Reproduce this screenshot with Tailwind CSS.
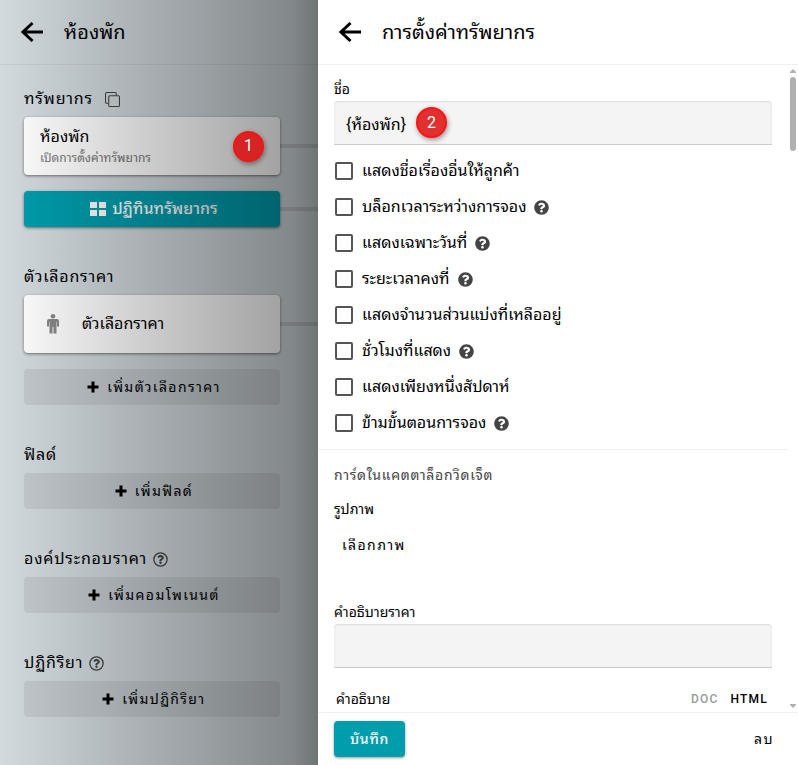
<!DOCTYPE html>
<html lang="th">
<head>
    <meta charset="UTF-8">
    <meta name="viewport" content="width=device-width, initial-scale=1.0">
    <title>การตั้งค่าทรัพยากร</title>
    <script src="https://cdn.jsdelivr.net/npm/@tailwindcss/browser@4"></script>
</head>
<body class="flex h-screen overflow-hidden bg-white font-['Roboto','Tahoma','Noto_Sans_Thai_Looped','Loma','Noto_Sans',sans-serif] text-base text-black">

    <!-- Shared icons -->
    <svg class="hidden">
        <symbol id="arrow" viewBox="0 0 22 22">
            <path d="M11.5 2 2 11l9.500 9M2.500 11H22" fill="none" stroke="currentColor" stroke-width="3"/>
        </symbol>
        <symbol id="plus" viewBox="0 0 12 12">
            <path d="M4.500 0.500h3v4h4v3h-4v4h-3v-4h-4v-3h4z" fill="currentColor"/>
        </symbol>
        <symbol id="help" viewBox="0 0 512 512">
            <path d="M504 256c0 137-111 248-248 248S8 393 8 256 119 8 256 8s248 111 248 248zM262.700 90c-54.500 0-89.300 23-116.500 63.800-3.500 5.300-2.400 12.400 2.700 16.300l34.700 26.300c5.200 3.900 12.600 3 16.700-2.100 17.900-22.700 30.100-35.800 57.300-35.800 20.400 0 45.700 13.100 45.700 33 0 15-12.400 22.700-32.500 34C247.100 238.500 216 254.900 216 296v4c0 6.600 5.400 12 12 12h56c6.600 0 12-5.400 12-12v-1.300c0-28.500 83.200-29.600 83.200-106.700 0-58-60.200-102-116.500-102zM256 338c-25.400 0-46 20.600-46 46s20.600 46 46 46 46-20.600 46-46-20.600-46-46-46z" fill="currentColor" fill-rule="evenodd"/>
        </symbol>
        <symbol id="help-outline" viewBox="0 0 512 512">
            <circle cx="256" cy="256" r="226" fill="none" stroke="currentColor" stroke-width="44"/>
            <path d="M262.700 104c-50 0-83 22-108 60-3.500 5.300-2.400 10.400 2.700 14.300l32 24c5.200 3.900 11 3 15-2.100 16-20 28-32 52-32 18 0 40 12 40 30 0 13-11 20-29 30-22 12-50 27-50 62v6c0 6.600 5.400 12 12 12h50c6.600 0 12-5.400 12-12v-2c0-24 78-26 78-94 0-52-54-96.200-106.700-96.200zM256 322c-23 0-42 19-42 42s19 42 42 42 42-19 42-42-19-42-42-42z" fill="currentColor"/>
        </symbol>
    </svg>

    <!-- Service page, dimmed behind the drawer -->
    <main class="relative min-w-0 flex-1 bg-[#d2dade]">
        <header class="flex h-[65px] items-center gap-[21px] border-b border-black/5 pl-[21px]">
            <button aria-label="กลับ"><svg class="size-[22px]"><use href="#arrow"/></svg></button>
            <h1 class="text-xl">ห้องพัก</h1>
        </header>

        <div class="flex flex-col gap-8 py-4 pl-6">
            <section>
                <div class="flex h-9 items-center gap-3">
                    <h2 class="tracking-wider">ทรัพยากร</h2>
                    <button aria-label="คัดลอก" class="text-[#444]">
                        <svg class="size-[15px]" viewBox="0 0 14 14" fill="none" stroke="currentColor">
                            <rect x="3.500" y="3.500" width="10" height="10" rx="1"/>
                            <path d="M3 10.500H1.500a1 1 0 0 1-1-1v-8a1 1 0 0 1 1-1h8a1 1 0 0 1 1 1V3"/>
                        </svg>
                    </button>
                </div>
                <div class="flex items-center">
                    <a href="#" class="flex h-[58px] flex-1 items-center justify-between rounded bg-white px-4 shadow-[0_1px_3px_rgba(0,0,0,0.5)]">
                        <span class="flex flex-col">
                            <span class="leading-6">ห้องพัก</span>
                            <span class="text-xs leading-[18px] text-[#777]">เปิดการตั้งค่าทรัพยากร</span>
                        </span>
                        <span class="relative z-10 flex size-[31px] items-center justify-center rounded-full border-2 border-[#f51414] bg-[#d62424] text-base text-white shadow-[1px_2px_5px_rgba(0,0,0,0.4)]">1</span>
                    </a>
                    <div class="h-1 w-[38px] bg-black/10"></div>
                </div>
                <div class="mt-4 flex items-center">
                    <button class="flex h-9 flex-1 items-center justify-center gap-[6px] rounded bg-[#009dac] pl-1 font-medium text-white shadow-[0_1px_3px_rgba(0,0,0,0.5)]">
                        <svg class="size-4" viewBox="0 0 16 16" fill="currentColor">
                            <path d="M0 1h7v6H0zM9 1h7v6H9zM0 9h7v6H0zM9 9h7v6H9z"/>
                        </svg>
                        ปฏิทินทรัพยากร
                    </button>
                    <div class="h-1 w-[38px] bg-black/10"></div>
                </div>
            </section>

            <section>
                <h2 class="flex h-9 items-center tracking-wider">ตัวเลือกราคา</h2>
                <div class="flex items-center">
                    <a href="#" class="flex h-[58px] flex-1 items-center gap-[23px] rounded bg-white pl-[23px] shadow-[0_1px_3px_rgba(0,0,0,0.5)]">
                        <svg class="h-5 w-3 text-[#888]" viewBox="0 0 12 20" fill="currentColor">
                            <circle cx="6" cy="2.300" r="2.300"/>
                            <path d="M2 5h8a2 2 0 0 1 2 2v5.500h-2V8h-.5v11.500h-3V13h-1v6.500h-3V8H2v4.500H0V7a2 2 0 0 1 2-2z"/>
                        </svg>
                        ตัวเลือกราคา
                    </a>
                    <div class="h-1 w-[38px] bg-black/10"></div>
                </div>
                <div class="mt-4 pr-[38px]">
                    <button class="flex h-9 w-full items-center justify-center gap-2 rounded bg-black/7 pb-px pl-1 text-sm tracking-widest">
                        <svg class="size-3"><use href="#plus"/></svg>
                        เพิ่มตัวเลือกราคา
                    </button>
                </div>
            </section>

            <section class="pr-[38px]">
                <h2 class="flex h-9 items-center tracking-wider">ฟิลด์</h2>
                <button class="flex h-9 w-full items-center justify-center gap-2 rounded bg-black/7 pb-px pl-1 text-sm tracking-widest">
                    <svg class="size-3"><use href="#plus"/></svg>
                    เพิ่มฟิลด์
                </button>
            </section>

            <section class="pr-[38px]">
                <div class="flex h-9 items-center gap-[6px]">
                    <h2 class="tracking-wider">องค์ประกอบราคา</h2>
                    <svg class="size-[15px] text-[#444]"><use href="#help-outline"/></svg>
                </div>
                <button class="flex h-9 w-full items-center justify-center gap-2 rounded bg-black/7 pb-px pl-1 text-sm tracking-widest">
                    <svg class="size-3"><use href="#plus"/></svg>
                    เพิ่มคอมโพเนนต์
                </button>
            </section>

            <section class="pr-[38px]">
                <div class="flex h-9 items-center gap-[6px]">
                    <h2 class="tracking-wider">ปฏิกิริยา</h2>
                    <svg class="size-[15px] text-[#444]"><use href="#help-outline"/></svg>
                </div>
                <button class="flex h-9 w-full items-center justify-center gap-2 rounded bg-black/7 pb-px pl-1 text-sm tracking-widest">
                    <svg class="size-3"><use href="#plus"/></svg>
                    เพิ่มปฏิกิริยา
                </button>
            </section>
        </div>

        <!-- Drawer shadow -->
        <div class="pointer-events-none absolute inset-0 bg-[linear-gradient(to_right,rgba(0,0,0,0)_0%,rgba(0,0,0,0.19)_44%,rgba(0,0,0,0.35)_85%,rgba(0,0,0,0.38)_92%,rgba(0,0,0,0.47)_100%)]"></div>
    </main>

    <!-- Resource settings drawer -->
    <aside class="flex w-[480px] flex-col bg-white">
        <header class="flex h-[65px] shrink-0 items-center gap-[21px] border-b border-[#f0f0f0] pl-[21px]">
            <button aria-label="กลับ"><svg class="size-[22px]"><use href="#arrow"/></svg></button>
            <h1 class="text-xl">การตั้งค่าทรัพยากร</h1>
        </header>

        <div class="flex min-h-0 flex-1">
            <form class="min-w-0 flex-1 overflow-hidden">
                <div class="px-4 pt-3">
                    <label for="name" class="block text-sm leading-6">ชื่อ</label>
                    <div class="relative">
                        <input id="name" type="text" value="{ห้องพัก}" class="block h-11 w-full rounded-t border-b border-[#ccc] bg-[#f4f4f4] px-3 inset-shadow-[0_1px_2px_rgba(0,0,0,0.1)]">
                        <span class="absolute top-[6px] left-[82px] flex size-[31px] items-center justify-center rounded-full border-2 border-[#ff1414] bg-[#e03030] text-white shadow-[1px_2px_5px_rgba(0,0,0,0.4)]">2</span>
                    </div>
                </div>

                <div class="border-b border-[#f0f0f0] px-[17px] py-2">
                    <label class="flex h-9 items-center gap-[9px]">
                        <input type="checkbox" class="size-[18px] appearance-none rounded-xs border-2 border-[#555]">
                        แสดงชื่อเรื่องอื่นให้ลูกค้า
                    </label>
                    <label class="flex h-9 items-center gap-[9px]">
                        <input type="checkbox" class="size-[18px] appearance-none rounded-xs border-2 border-[#555]">
                        <span class="flex items-center gap-2">บล็อกเวลาระหว่างการจอง <svg class="size-[15px] text-[#444]"><use href="#help"/></svg></span>
                    </label>
                    <label class="flex h-9 items-center gap-[9px]">
                        <input type="checkbox" class="size-[18px] appearance-none rounded-xs border-2 border-[#555]">
                        <span class="flex items-center gap-2">แสดงเฉพาะวันที่ <svg class="size-[15px] text-[#444]"><use href="#help"/></svg></span>
                    </label>
                    <label class="flex h-9 items-center gap-[9px]">
                        <input type="checkbox" class="size-[18px] appearance-none rounded-xs border-2 border-[#555]">
                        <span class="flex items-center gap-2">ระยะเวลาคงที่ <svg class="size-[15px] text-[#444]"><use href="#help"/></svg></span>
                    </label>
                    <label class="flex h-9 items-center gap-[9px]">
                        <input type="checkbox" class="size-[18px] appearance-none rounded-xs border-2 border-[#555]">
                        แสดงจำนวนส่วนแบ่งที่เหลืออยู่
                    </label>
                    <label class="flex h-9 items-center gap-[9px]">
                        <input type="checkbox" class="size-[18px] appearance-none rounded-xs border-2 border-[#555]">
                        <span class="flex items-center gap-2">ชั่วโมงที่แสดง <svg class="size-[15px] text-[#444]"><use href="#help"/></svg></span>
                    </label>
                    <label class="flex h-9 items-center gap-[9px]">
                        <input type="checkbox" class="size-[18px] appearance-none rounded-xs border-2 border-[#555]">
                        แสดงเพียงหนึ่งสัปดาห์
                    </label>
                    <label class="flex h-9 items-center gap-[9px]">
                        <input type="checkbox" class="size-[18px] appearance-none rounded-xs border-2 border-[#555]">
                        <span class="flex items-center gap-2">ข้ามขั้นตอนการจอง <svg class="size-[15px] text-[#444]"><use href="#help"/></svg></span>
                    </label>
                </div>

                <div class="px-4 pt-[7px]">
                    <h2 class="text-sm leading-9 tracking-wider text-[#444]">การ์ดในแคตตาล็อกวิดเจ็ต</h2>
                    <p class="mt-1 text-sm leading-6">รูปภาพ</p>
                    <button type="button" class="mt-[6px] h-9 px-2 text-sm tracking-widest">เลือกภาพ</button>
                    <label for="price" class="mt-[37px] block text-sm leading-6">คำอธิบายราคา</label>
                    <input id="price" type="text" class="block h-11 w-full rounded-t border-b border-[#ccc] bg-[#f4f4f4] px-3 inset-shadow-[0_1px_2px_rgba(0,0,0,0.1)]">
                    <div class="mt-[19px] flex h-6 items-center pr-1 pl-[2px] text-sm">
                        <span class="flex-1">คำอธิบาย</span>
                        <button type="button" class="mr-3 text-xs font-medium tracking-widest text-[#999]">DOC</button>
                        <button type="button" class="text-xs font-medium tracking-widest">HTML</button>
                    </div>
                </div>
            </form>

            <!-- Scrollbar -->
            <div class="flex w-[10px] flex-col items-center py-1">
                <svg class="h-1 w-[6px]" viewBox="0 0 6 4"><path d="M3 0l3 3v1H0V3z" fill="#b0b0b0"/></svg>
                <div class="mt-1 h-[74px] w-[6px] rounded-full bg-[#b0b0b0]"></div>
                <svg class="mt-auto h-1 w-[6px]" viewBox="0 0 6 4"><path d="M3 4l3-3V0H0v1z" fill="#b0b0b0"/></svg>
            </div>
        </div>

        <footer class="flex h-[53px] shrink-0 items-center justify-between border-t border-[#f0f0f0] pr-6 pl-4 text-sm">
            <button class="h-9 rounded bg-[#009dac] px-4 font-medium tracking-wider text-white shadow-[0_1px_3px_rgba(0,0,0,0.4)]">บันทึก</button>
            <button class="tracking-widest">ลบ</button>
        </footer>
    </aside>
</body>
</html>
